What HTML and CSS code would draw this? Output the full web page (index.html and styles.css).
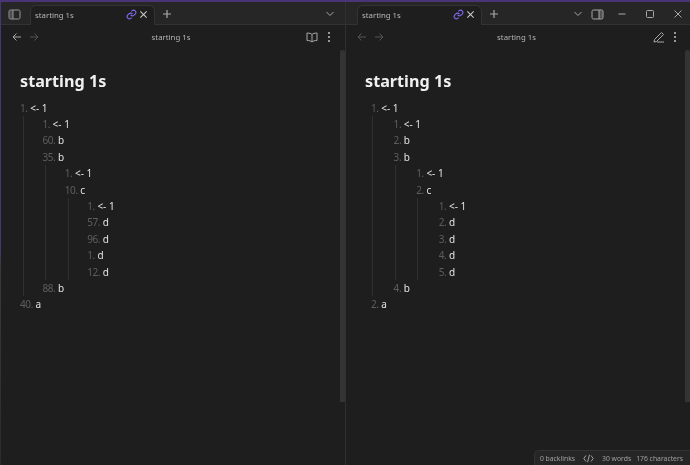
FILE: index.html
```html
<!DOCTYPE html>
<html lang="en">
<head>
    <meta charset="UTF-8">
    <title>starting 1s - Obsidian</title>
    <link rel="stylesheet" href="styles.css">
</head>
<body>
    <div class="window">
        <!-- left pane: editing view -->
        <div class="pane pane-left">
            <div class="tabbar">
                <button class="icon-btn sidebar-btn">
                    <svg width="13" height="11" viewBox="0 0 13 11"><rect x="1" y="1" width="11" height="9" rx="1.500"/><path d="M5 1v9"/><path d="M1.500 1.500H5v8H1.500z" class="fill"/></svg>
                </button>
                <div class="tab">
                    <span class="tab-title">starting 1s</span>
                    <svg class="link-icon" width="11" height="11" viewBox="0 0 24 24"><path d="M10 13a5 5 0 0 0 7.500.5l3-3a5 5 0 0 0-7-7l-1.700 1.700"/><path d="M14 11a5 5 0 0 0-7.500-.5l-3 3a5 5 0 0 0 7 7l1.700-1.700"/></svg>
                    <svg class="close-icon" width="9" height="9" viewBox="0 0 10 10"><path d="M1.500 1.500l7 7M8.500 1.500l-7 7"/></svg>
                </div>
                <svg class="plus-icon" width="10" height="10" viewBox="0 0 10 10"><path d="M5 1v8M1 5h8"/></svg>
                <div class="spacer"></div>
                <svg class="chevron-left" width="10" height="6" viewBox="0 0 10 6"><path d="M1.500 1L5 4.500 8.500 1"/></svg>
            </div>
            <div class="viewbar">
                <div class="nav">
                    <svg width="10" height="10" viewBox="0 0 10 10"><path d="M9 5H1M4.500 1.500L1 5l3.500 3.500"/></svg>
                    <svg class="dim" width="10" height="10" viewBox="0 0 10 10"><path d="M1 5h8M5.500 1.500L9 5 5.500 8.500"/></svg>
                </div>
                <div class="view-title">starting 1s</div>
                <div class="view-actions">
                    <svg width="12" height="11" viewBox="0 0 12 11"><path d="M6 2.500C5 1.500 3.500 1 1 1v7.500c2.500 0 4 .5 5 1.500 1-1 2.500-1.500 5-1.500V1C8.500 1 7 1.500 6 2.500zM6 2.500V10"/></svg>
                    <div class="dots"><i></i><i></i><i></i></div>
                </div>
            </div>
            <div class="content">
                <h1>starting 1s</h1>
                <ol class="tree">
                    <li><span class="num">1.</span> &lt;- 1
                        <ol>
                            <li><span class="num">1.</span> &lt;- 1</li>
                            <li><span class="num">60.</span> b</li>
                            <li><span class="num">35.</span> b
                                <ol>
                                    <li><span class="num">1.</span> &lt;- 1</li>
                                    <li><span class="num">10.</span> c
                                        <ol>
                                            <li><span class="num">1.</span> &lt;- 1</li>
                                            <li><span class="num">57.</span> d</li>
                                            <li><span class="num">96.</span> d</li>
                                            <li><span class="num">1.</span> d</li>
                                            <li><span class="num">12.</span> d</li>
                                        </ol>
                                    </li>
                                </ol>
                            </li>
                            <li><span class="num">88.</span> b</li>
                        </ol>
                    </li>
                    <li><span class="num">40.</span> a</li>
                </ol>
            </div>
            <div class="scrollbar"></div>
        </div>

        <!-- right pane: reading view -->
        <div class="pane pane-right">
            <div class="tabbar">
                <div class="tab">
                    <span class="tab-title">starting 1s</span>
                    <svg class="link-icon" width="11" height="11" viewBox="0 0 24 24"><path d="M10 13a5 5 0 0 0 7.500.5l3-3a5 5 0 0 0-7-7l-1.700 1.700"/><path d="M14 11a5 5 0 0 0-7.500-.5l-3 3a5 5 0 0 0 7 7l1.700-1.700"/></svg>
                    <svg class="close-icon" width="9" height="9" viewBox="0 0 10 10"><path d="M1.500 1.500l7 7M8.500 1.500l-7 7"/></svg>
                </div>
                <svg class="plus-icon" width="10" height="10" viewBox="0 0 10 10"><path d="M5 1v8M1 5h8"/></svg>
                <div class="spacer"></div>
                <svg class="chevron-right" width="10" height="6" viewBox="0 0 10 6"><path d="M1.500 1L5 4.500 8.500 1"/></svg>
                <svg class="layout-icon" width="13" height="11" viewBox="0 0 13 11"><rect x="1" y="1" width="11" height="9" rx="1.500"/><path d="M8 1v9"/><path d="M8 1.500h3.500v8H8z" class="fill"/></svg>
                <div class="win-controls">
                    <svg width="10" height="10" viewBox="0 0 10 10"><path d="M1.500 5h7"/></svg>
                    <svg width="10" height="10" viewBox="0 0 10 10"><rect x="1.500" y="1.500" width="7" height="7" rx="1"/></svg>
                    <svg width="10" height="10" viewBox="0 0 10 10"><path d="M1.500 1.500l7 7M8.500 1.500l-7 7"/></svg>
                </div>
            </div>
            <div class="viewbar">
                <div class="nav">
                    <svg class="dim" width="10" height="10" viewBox="0 0 10 10"><path d="M9 5H1M4.500 1.500L1 5l3.500 3.500"/></svg>
                    <svg class="dim" width="10" height="10" viewBox="0 0 10 10"><path d="M1 5h8M5.500 1.500L9 5 5.500 8.500"/></svg>
                </div>
                <div class="view-title">starting 1s</div>
                <div class="view-actions">
                    <svg width="12" height="12" viewBox="0 0 12 12"><path d="M1.500 8.500L8.500 1.500l2 2-7 7-2.500.5zM4 11h7"/></svg>
                    <div class="dots"><i></i><i></i><i></i></div>
                </div>
            </div>
            <div class="content reading">
                <h1>starting 1s</h1>
                <ol class="tree">
                    <li><span class="num">1.</span> &lt;- 1
                        <ol>
                            <li><span class="num">1.</span> &lt;- 1</li>
                            <li><span class="num">2.</span> b</li>
                            <li><span class="num">3.</span> b
                                <ol>
                                    <li><span class="num">1.</span> &lt;- 1</li>
                                    <li><span class="num">2.</span> c
                                        <ol>
                                            <li><span class="num">1.</span> &lt;- 1</li>
                                            <li><span class="num">2.</span> d</li>
                                            <li><span class="num">3.</span> d</li>
                                            <li><span class="num">4.</span> d</li>
                                            <li><span class="num">5.</span> d</li>
                                        </ol>
                                    </li>
                                </ol>
                            </li>
                            <li><span class="num">4.</span> b</li>
                        </ol>
                    </li>
                    <li><span class="num">2.</span> a</li>
                </ol>
            </div>
            <div class="scrollbar"></div>
            <div class="statusbar">
                <span>0 backlinks</span>
                <svg class="code-icon" width="11" height="9" viewBox="0 0 11 9"><path d="M3 1.500L.8 4.500 3 7.500M8 1.500l2.200 3L8 7.500M6.500.8l-2 7.400"/></svg>
                <span>30 words</span>
                <span>176 characters</span>
            </div>
        </div>
    </div>
</body>
</html>
```

FILE: styles.css
```css
* {
    box-sizing: border-box;
}

html, body {
    margin: 0;
    height: 100%;
    overflow: hidden;
    background-color: #1e1e1e;
}

body {
    font-family: "Noto Sans", "Open Sans", sans-serif;
    color: #dadada;
}

svg {
    fill: none;
    stroke: currentColor;
    stroke-width: 1;
    flex: none;
}

.window {
    display: flex;
    width: 690px;
    height: 465px;
    will-change: transform;
    border-top: 2px solid #4a3478;
    border-left: 1px solid;
    border-image: linear-gradient(to bottom, #4a3478 0, #4a3478 53%, #3a3a3a 57%, #2b2b2b 100%) 1;
}

.pane {
    position: relative;
    display: flex;
    flex-direction: column;
    height: 100%;
}

.pane-left {
    flex: none;
    width: 345px;
    border-right: 1px solid #303030;
}

.pane-right {
    flex: 1;
    min-width: 0;
}

.tabbar {
    display: flex;
    align-items: flex-end;
    flex: none;
    height: 23px;
    background-color: #262626;
    border-bottom: 1px solid #333333;
    color: #a8a8a8;
}

.sidebar-btn {
    display: flex;
    align-items: center;
    margin: 0 0 4px 7px;
    padding: 0;
    width: 22px;
    background: none;
    border: none;
    color: #989898;
}

.fill {
    fill: currentColor;
    fill-opacity: 0.35;
    stroke: none;
}

.tab {
    display: flex;
    align-items: center;
    width: 125px;
    height: 20px;
    margin-bottom: -1px;
    padding: 0 6px 2px 4px;
    background-color: #1e1e1e;
    border: 1px solid #333333;
    border-bottom: none;
    border-radius: 6px 6px 0 0;
}

.pane-right .tab {
    margin-left: 11px;
}

.tab-title {
    flex: 1;
    font-size: 7.800px;
    color: #b8b8b8;
}

.link-icon {
    color: #7f6df2;
    margin-right: 2px;
    stroke-width: 2.400;
}

.close-icon {
    color: #c8c8c8;
    stroke-width: 1.200;
}

.plus-icon {
    margin: 0 0 5px 7px;
    stroke-width: 1.200;
}

.spacer {
    flex: 1;
}

.chevron-left {
    margin: 0 10px 7px 0;
}

.chevron-right {
    margin: 0 8px 7px 0;
}

.layout-icon {
    margin: 0 0 4px 0;
}

.win-controls {
    display: flex;
    gap: 18px;
    margin: 0 7px 5px 13px;
}

.viewbar {
    display: flex;
    align-items: center;
    flex: none;
    height: 24px;
    padding: 0 15px 0 11px;
    color: #a8a8a8;
}

.pane-right .viewbar {
    padding-right: 14px;
}

.pane-right .view-actions {
    gap: 9px;
}

.nav {
    display: flex;
    gap: 7px;
    width: 60px;
}

.dim {
    color: #555555;
}

.view-title {
    flex: 1;
    text-align: center;
    font-size: 7.800px;
    color: #b4b4b4;
}

.view-actions {
    display: flex;
    align-items: center;
    justify-content: flex-end;
    gap: 10px;
    width: 60px;
}

.dots {
    display: flex;
    flex-direction: column;
    gap: 2px;
}

.dots i {
    display: block;
    width: 2px;
    height: 2px;
    border-radius: 50%;
    background-color: #c0c0c0;
}

.content {
    flex: 1;
    padding: 20px 0 0 19px;
    font-size: 10px;
    line-height: 16.400px;
    color: #e4e4e4;
}

.content h1 {
    margin: 0 0 6.500px;
    font-size: 16.200px;
    line-height: 24px;
    font-weight: 700;
    color: #f0f0f0;
}

.tree, .tree ol {
    margin: 0;
    padding: 0;
    list-style: none;
}

.tree ol {
    margin-left: 3px;
    padding-left: 18.400px;
    border-left: 1px solid #303030;
}

.num {
    color: #5e5e5e;
    letter-spacing: -0.4px;
}

.reading .tree {
    padding-left: 6px;
}

.reading .tree ol {
    margin-left: 1px;
    padding-left: 20.600px;
}

.scrollbar {
    position: absolute;
    top: 48px;
    right: 0;
    width: 5px;
    height: 352px;
    background-color: #343434;
    border-radius: 3px 3px 0 0;
}

.statusbar {
    position: absolute;
    right: 0;
    bottom: 0;
    display: flex;
    align-items: center;
    gap: 5px;
    height: 15px;
    padding: 0 7px 0 5px;
    font-size: 6.800px;
    color: #a0a0a0;
    background-color: #262626;
    border: 1px solid #333333;
    border-width: 1px 0 0 1px;
    border-radius: 5px 0 0 0;
}

.code-icon {
    margin: 0 3px;
}
```
